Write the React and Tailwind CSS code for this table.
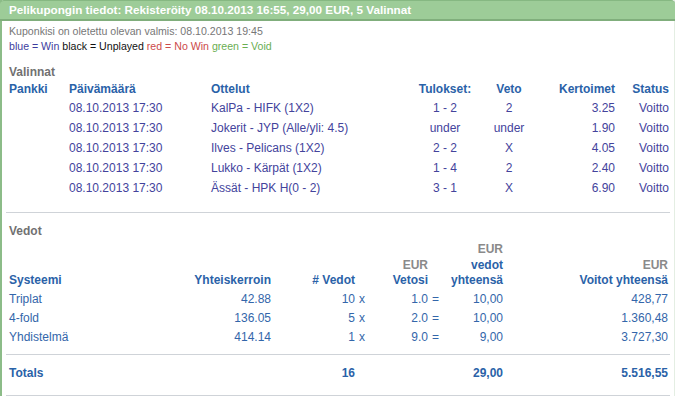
import React from "react";

const picks = [
  { date: "08.10.2013 17:30", match: "KalPa - HIFK (1X2)", result: "1 - 2", bet: "2", odds: "3.25", status: "Voitto" },
  { date: "08.10.2013 17:30", match: "Jokerit - JYP (Alle/yli: 4.5)", result: "under", bet: "under", odds: "1.90", status: "Voitto" },
  { date: "08.10.2013 17:30", match: "Ilves - Pelicans (1X2)", result: "2 - 2", bet: "X", odds: "4.05", status: "Voitto" },
  { date: "08.10.2013 17:30", match: "Lukko - Kärpät (1X2)", result: "1 - 4", bet: "2", odds: "2.40", status: "Voitto" },
  { date: "08.10.2013 17:30", match: "Ässät - HPK H(0 - 2)", result: "3 - 1", bet: "X", odds: "6.90", status: "Voitto" },
];

const bets = [
  { system: "Triplat", odds: "42.88", count: "10", stake: "1.0", total: "10,00", win: "428,77" },
  { system: "4-fold", odds: "136.05", count: "5", stake: "2.0", total: "10,00", win: "1.360,48" },
  { system: "Yhdistelmä", odds: "414.14", count: "1", stake: "9.0", total: "9,00", win: "3.727,30" },
];

const pickCols = "grid grid-cols-[60px_142px_199px_70px_58px_77px_54px]";
const betCols = "grid grid-cols-[181px_81px_84px_13px_60px_13px_62px_165px]";

export default function App() {
  return (
    <div className="w-[677px] h-[396px] bg-white overflow-hidden font-['Liberation_Sans',Arial,sans-serif]">
      <div className="w-[675px] h-[396px] border-l-2 border-r border-l-[#8cbc88] border-r-[#e4eee3]">
        <div className="h-[21px] -ml-[2px] -mr-px bg-[#9dcc98] border-t border-b-2 border-t-[#86b882] border-b-[#80ae7c] rounded-t-[4px] pl-[9px] flex items-center">
          <span className="text-white font-bold text-[11.7px] leading-none whitespace-nowrap">
            Pelikupongin tiedot: Rekisteröity 08.10.2013 16:55, 29,00 EUR, 5 Valinnat
          </span>
        </div>

        <div className="pl-[7px] mt-[2px] h-[16px] leading-[16px] text-[10.6px] text-[#777]">
          Kuponkisi on oletettu olevan valmis: 08.10.2013 19:45
        </div>
        <div className="pl-[7px] h-[14px] leading-[14px] text-[10.6px] whitespace-nowrap">
          <span className="text-[#3d3d9e]">blue = Win</span>{" "}
          <span className="text-[#111]">black = Unplayed</span>{" "}
          <span className="text-[#cc4a4a]">red = No Win</span>{" "}
          <span className="text-[#6aae52]">green = Void</span>
        </div>

        <div className="pl-[7px] mt-[11px] h-[16px] leading-[16px] text-[12px] font-bold text-[#717171]">
          Valinnat
        </div>

        <div className="pl-[7px] text-[12px]">
          <div className={`${pickCols} h-[18px] leading-[18px] font-bold text-[#2a62a8]`}>
            <div>Pankki</div>
            <div>Päivämäärä</div>
            <div>Ottelut</div>
            <div className="text-center">Tulokset:</div>
            <div className="text-center">Veto</div>
            <div className="text-right">Kertoimet</div>
            <div className="text-right">Status</div>
          </div>
          {picks.map((p, i) => (
            <div key={i} className={`${pickCols} h-[20px] leading-[20px] text-[#43439c] whitespace-nowrap`}>
              <div></div>
              <div>{p.date}</div>
              <div>{p.match}</div>
              <div className="text-center">{p.result}</div>
              <div className="text-center">{p.bet}</div>
              <div className="text-right">{p.odds}</div>
              <div className="text-right">{p.status}</div>
            </div>
          ))}
        </div>

        <div className="ml-[4px] w-[664px] h-px bg-[#cfd3d8] mt-[14px]" />

        <div className="pl-[7px] mt-[9px] h-[18px] leading-[18px] text-[12px] font-bold text-[#717171]">
          Vedot
        </div>

        <div className="pl-[7px] text-[12px]">
          <div className={`${betCols} items-end mt-[2px] leading-[15.5px] font-bold text-[#2a62a8] whitespace-nowrap`}>
            <div>Systeemi</div>
            <div className="text-right">Yhteiskerroin</div>
            <div className="text-right"># Vedot</div>
            <div></div>
            <div className="text-right">
              <div className="text-[#8a8a8a]">EUR</div>
              <div>Vetosi</div>
            </div>
            <div></div>
            <div className="text-right">
              <div className="text-[#8a8a8a]">EUR</div>
              <div>vedot</div>
              <div>yhteensä</div>
            </div>
            <div className="text-right">
              <div className="text-[#8a8a8a]">EUR</div>
              <div>Voitot yhteensä</div>
            </div>
          </div>

          <div className="mt-px">
            {bets.map((b, i) => (
              <div key={i} className={`${betCols} h-[19px] leading-[19px] text-[#3366aa] whitespace-nowrap`}>
                <div>{b.system}</div>
                <div className="text-right">{b.odds}</div>
                <div className="text-right">{b.count}</div>
                <div className="pl-[4px]">x</div>
                <div className="text-right">{b.stake}</div>
                <div className="pl-[4px]">=</div>
                <div className="text-right">{b.total}</div>
                <div className="text-right">{b.win}</div>
              </div>
            ))}
          </div>
        </div>

        <div className="ml-[4px] w-[664px] h-px bg-[#cfd3d8] mt-[7px]" />

        <div className="pl-[7px] pt-[9px] pb-[13px] text-[12px]">
          <div className={`${betCols} h-[18px] leading-[18px] font-bold text-[#2a62a8]`}>
            <div>Totals</div>
            <div></div>
            <div className="text-right">16</div>
            <div></div>
            <div></div>
            <div></div>
            <div className="text-right">29,00</div>
            <div className="text-right">5.516,55</div>
          </div>
        </div>

        <div className="ml-[4px] w-[664px] h-px bg-[#cfd3d8]" />
      </div>
    </div>
  );
}
